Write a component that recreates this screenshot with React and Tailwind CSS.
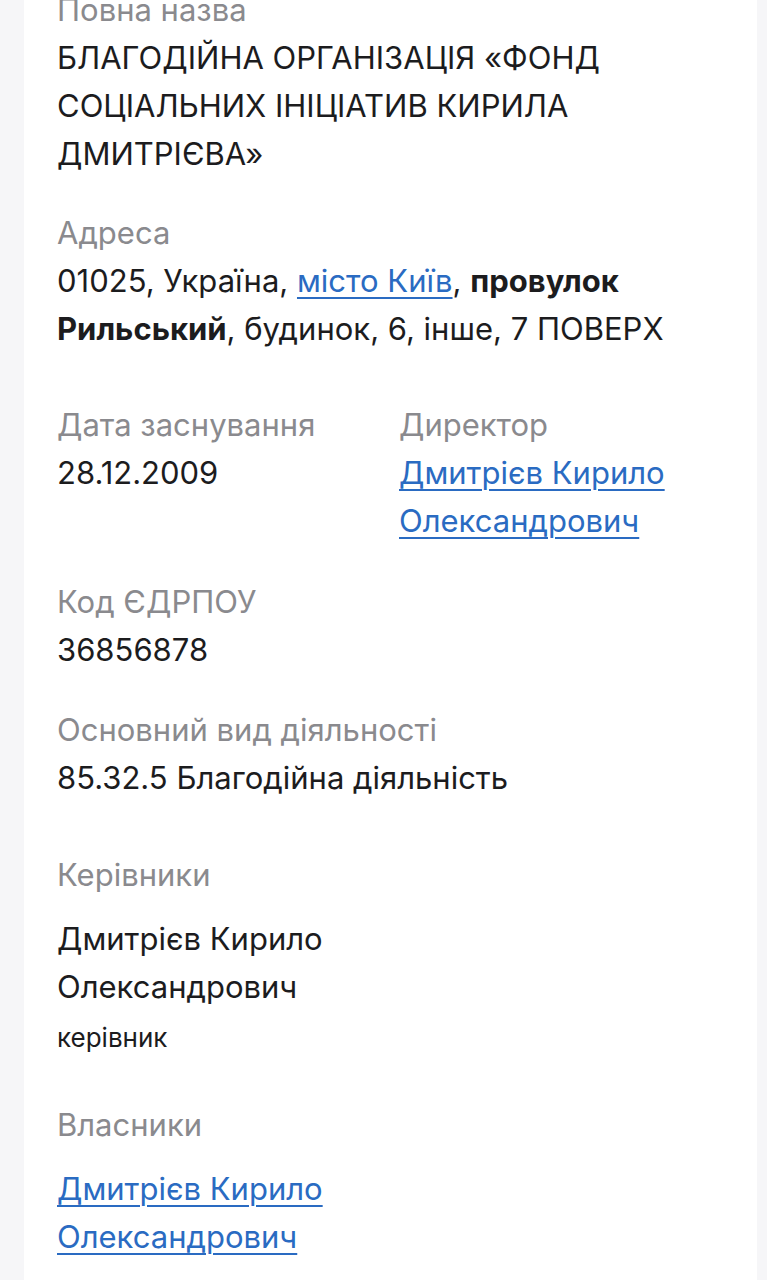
const Label = ({ children, className = '' }) => (
  <div className={`text-[#8a8a8e] ${className}`}>{children}</div>
)

const LinkText = ({ children }) => (
  <a href="#" className="text-[#2a6bc2] underline decoration-[1.5px] underline-offset-[5px]">
    {children}
  </a>
)

export default function App() {
  return (
    <div
      className="min-h-screen bg-[#f6f6f8] text-[31px] leading-[48px] text-[#1c1c1e]"
      style={{ fontFamily: 'Inter, "Noto Sans", sans-serif' }}
    >
      <div className="mx-[24px] mr-[10px] min-h-[1280px] overflow-hidden bg-white px-[33px]">
        <div className="-mt-[14px] pb-10">
          {/* Повна назва */}
          <Label>Повна назва</Label>
          <div>БЛАГОДІЙНА ОРГАНІЗАЦІЯ «ФОНД СОЦІАЛЬНИХ ІНІЦІАТИВ КИРИЛА ДМИТРІЄВА»</div>

          {/* Адреса */}
          <Label className="mt-[31px]">Адреса</Label>
          <div>
            01025, Україна, <LinkText>місто Київ</LinkText>, <b className="font-bold">провулок Рильський</b>, будинок, 6, інше, 7 ПОВЕРХ
          </div>

          {/* Дата / Директор */}
          <div className="mt-[48px] grid grid-cols-[342px_1fr]">
            <div>
              <Label>Дата заснування</Label>
              <div>28.12.2009</div>
            </div>
            <div>
              <Label>Директор</Label>
              <div>
                <LinkText>Дмитрієв Кирило Олександрович</LinkText>
              </div>
            </div>
          </div>

          <Label className="mt-[33px]">Код ЄДРПОУ</Label>
          <div>36856878</div>

          <Label className="mt-[32px]">Основний вид діяльності</Label>
          <div>85.32.5 Благодійна діяльність</div>

          {/* Керівники */}
          <Label className="mt-[49px]">Керівники</Label>
          <div className="mt-[16px] w-[300px]">Дмитрієв Кирило Олександрович</div>
          <div className="text-[26px] leading-[54px]">керівник</div>

          {/* Власники */}
          <Label className="mt-[36px]">Власники</Label>
          <div className="mt-[16px] w-[300px]">
            <LinkText>Дмитрієв Кирило Олександрович</LinkText>
          </div>
        </div>
      </div>
    </div>
  )
}
